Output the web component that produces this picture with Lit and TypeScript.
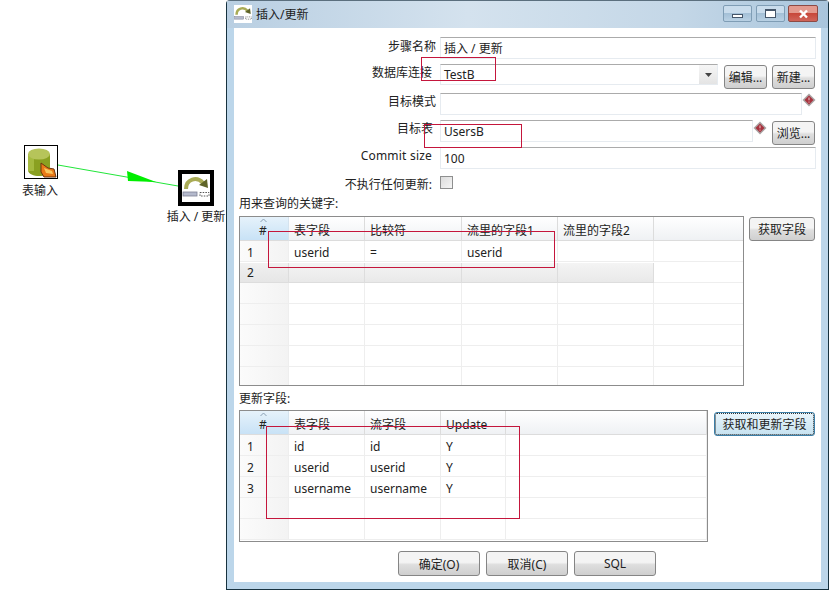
import { LitElement, html, css, svg } from "lit";
import { customElement, property } from "lit/decorators.js";

const diamond = svg`<svg width="14" height="14" viewBox="0 0 14 14"><path d="M7 .5 13.5 7 7 13.5 .5 7Z" fill="#a9a3a3"/><path d="M7 2.5 11.5 7 7 11.5 2.5 7Z" fill="#a8323e"/><path d="M7 4.5v2.8M7 8.6v1" stroke="#f0d0d0" stroke-width="1"/></svg>`;

const updateIcon = (s: number) => html`<svg width="${s}" height="${s}" viewBox="0 0 28 28">
  <path d="M4 15C4 5 15 2 21 9" fill="none" stroke="#a9ab55" stroke-width="4"/>
  <path d="M17 11 26 14 25 5Z" fill="#5f6428"/>
  <rect x="1" y="18" width="14" height="4" fill="#b4b9cc" stroke="#7e8194" stroke-width=".8"/>
  <rect x="18" y="18.5" width="9" height="3.5" fill="none" stroke="#555" stroke-width="1" stroke-dasharray="1.5 1.2"/>
</svg>`;

@customElement("grid-table")
export class GridTable extends LitElement {
  @property({ type: Array }) cols: number[] = [];
  @property({ type: Array }) heads: string[] = [];
  @property({ type: Array }) rows: string[][] = [];
  @property({ type: Number }) total = 0;
  @property({ type: Number }) selected = -1;
  static styles = css`
    :host { display: block; border: 1px solid #8c8c8c; background: #fff; overflow: hidden; height: 100%; box-sizing: border-box; }
    .row { display: flex; height: 21px; }
    .row.head { height: 24px; }
    .c { box-sizing: border-box; flex: none; border-right: 1px solid #eeeeee; border-bottom: 1px solid #eeeeee; padding-left: 5px; line-height: 23px; white-space: nowrap; overflow: hidden; }
    .c.n { background: linear-gradient(90deg, #fbfbfb, #f3f3f3); padding-left: 7px; }
    .head .c { background: linear-gradient(#ffffff, #eff1f4); border-color: #dcdcdc; line-height: 27px; }
    .head .c.n { background: linear-gradient(#e6f2fb, #c8e2f6); text-align: center; padding: 0 2px 0 0; position: relative; border-right-color: #d5e3ee; }
    .chev { position: absolute; left: 20px; top: 1px; }
    .row.sel { height: 20px; margin-top: 1px; }
    .sel .c { background: linear-gradient(#f4f4f4, #e9e9e9); border-color: #dddddd; line-height: 20px; }
    .sel .c.n { background: linear-gradient(#f0f0f0, #e6e6e6); }
    .sel .c:last-child { background: #fff; border-color: #eeeeee; }
  `;
  render() {
    const blank = Array.from({ length: Math.max(0, this.total - this.rows.length) }, () => [] as string[]);
    return html`
      <div class="row head">
        ${this.cols.map((w, i) => html`<div class="c ${i === 0 ? "n" : ""}" style="width:${w}px">
          ${i === 0 ? html`<svg class="chev" width="7" height="5" viewBox="0 0 7 5"><path d="M.5 4 3.5 1 6.5 4" fill="none" stroke="#8aa0b4"/></svg>` : ""}${this.heads[i] ?? ""}</div>`)}
      </div>
      ${[...this.rows, ...blank].map((r, ri) => html`
        <div class="row ${ri === this.selected ? "sel" : ""}">
          ${this.cols.map((w, i) => html`<div class="c ${i === 0 ? "n" : ""}" style="width:${w}px">${r[i] ?? ""}</div>`)}
        </div>`)}
    `;
  }
}

@customElement("app-root")
export class AppRoot extends LitElement {
  static styles = css`
    :host { display: block; position: relative; width: 836px; height: 605px; background: #fff; overflow: hidden;
      font: 12px "Noto Sans", "Noto Sans CJK SC", sans-serif; color: #222; }
    .node { position: absolute; display: flex; flex-direction: column; align-items: center; }
    .n1 { left: 11px; top: 145px; width: 60px; }
    .n2 { left: 165px; top: 170px; width: 62px; }
    .ic1 { width: 32px; height: 32px; border: 1px solid #000; background: #fff; display: block; }
    .ic2 { width: 28px; height: 28px; border: 4px solid #000; background: #fff; display: flex; align-items: center; justify-content: center; }
    .nl { margin-top: 3px; margin-left: -2px; white-space: nowrap; line-height: 17px; }
    .n2 .nl { margin-top: 2px; margin-left: 0; }
    .link { position: absolute; left: 0; top: 0; }
    .win { position: absolute; left: 226px; top: 0; width: 603px; height: 590px; box-sizing: border-box;
      border: 1px solid #17323f; border-top-color: #5b6f7e; border-radius: 4px 4px 0 0;
      background: #bcd6ea;
      display: flex; flex-direction: column; padding: 0 7px 7px 7px; }
    .win::before { content: ""; position: absolute; left: 0; right: 0; top: 0; height: 27px;
      background: linear-gradient(90deg, #b9cfe2, #d4e2ee 40%, #c4d7e7 75%, #a9c5dc); }
    .title { position: relative; height: 26px; flex: none; display: flex; align-items: center; gap: 4px; }
    .title .ti { width: 18px; height: 18px; background: #fff; display: flex; }
    .title span { color: #1c1c1c; }
    .caps { margin-left: auto; display: flex; gap: 4px; align-items: flex-start; margin-right: 3px; margin-top: -1px; }
    .cap { width: 29px; height: 17px; box-sizing: border-box; border: 1px solid #7f9db5; border-radius: 2px;
      background: linear-gradient(#c9dcec 45%, #a4c0d7 50%, #b9d1e4); display: flex; align-items: center; justify-content: center; }
    .cap.x { width: 30px; margin-left: -1px; background: linear-gradient(#e39a8e 45%, #c8483a 50%, #d0655a); border-color: #8d4a44; }
    .cap i { display: block; box-sizing: border-box; background: #fff; }
    .body { flex: 1; background: #fff; box-sizing: border-box; padding: 10px 5px 0 5px; display: flex; flex-direction: column; min-height: 0; }
    .form { display: grid; grid-template-columns: 194px 1fr; column-gap: 7px;
      grid-template-rows: 27px 29px 27px 27px 29px 20px; flex: none; }
    .lab { text-align: right; line-height: 18px; white-space: nowrap; }
    .lab.wide { margin-right: -3px; }
    .lab.low { padding-top: 1px; }
    .lab.tight { margin-right: 1px; }
    .lab.spaced { letter-spacing: .2px; }
    .ctl { display: flex; gap: 5px; align-items: flex-start; min-width: 0; }
    .inp { flex: 1; min-width: 0; height: 22px; box-sizing: border-box; border: 1px solid #e6ebf0; border-top-color: #ababab;
      padding-left: 3px; line-height: 22px; background: #fff; }
    .combo { height: 21px; display: flex; justify-content: space-between; line-height: 20px; margin-right: 1px; }
    .drop { width: 18px; background: linear-gradient(#f6f6f6, #e4e4e4); display: flex; align-items: center; justify-content: center; }
    .btn { flex: none; box-sizing: border-box; height: 24px; border: 1px solid #858585; border-radius: 3px;
      background: linear-gradient(#f4f4f4 45%, #dedede 55%, #cfcfcf); display: flex; align-items: center; justify-content: center; white-space: nowrap; color: #222; }
    .w43 { width: 43px; margin-top: 1px; }
    .end { margin-right: 1px; }
    .dia { flex: none; display: block; }
    .d3 { margin-left: -5px; }
    .d4 { margin-left: -5px; margin-top: 1px; }
    .chk { width: 13px; height: 13px; box-sizing: border-box; border: 1px solid #8e8f8f; background: linear-gradient(135deg, #dcdcdc, #f5f5f5); }
    .sec { flex: none; height: 19px; line-height: 14px; margin-top: 1px; }
    .split { display: flex; flex: none; }
    .t1 { width: 505px; height: 170px; flex: none; }
    .t2 { width: 469px; height: 132px; flex: none; }
    .side1 { margin-left: 5px; width: 66px; margin-top: 1px; }
    .side2 { margin-left: 6px; width: 101px; margin-top: 2px; border: 1px solid #3c7fa8;
      background: linear-gradient(#e9f5fb, #c6e2f0); outline: 1px dotted #333; outline-offset: -2px; }
    .sec2 { margin-top: 6px; height: 18px; line-height: 14px; flex: none; }
    .foot { display: flex; justify-content: flex-start; gap: 6px; padding: 9px 0 0 159px; flex: none; }
    .foot .btn { width: 82px; height: 25px; }
    .mark { position: absolute; box-sizing: border-box; border: 1px solid #c4163c; pointer-events: none; }
    .m1 { left: 421px; top: 57px; width: 75px; height: 24px; }
    .m2 { left: 424px; top: 124px; width: 98px; height: 24px; }
    .m3 { left: 268px; top: 231px; width: 287px; height: 37px; }
    .m4 { left: 266px; top: 426px; width: 254px; height: 93px; }
  `;
  render() {
    return html`
      <svg class="link" width="230" height="230">
        <path d="M58 165 178 186" stroke="#22e63a" stroke-width="1"/>
        <path d="M127 171 128 181 156 182Z" fill="#00ee00"/>
      </svg>
      <div class="node n1">
        <svg class="ic1" viewBox="0 0 32 32">
          <path d="M3 8V24C3 28 9 30 14 30S25 28 25 24V8Z" fill="#8aa021"/>
          <rect x="3" y="9" width="6" height="16" fill="#a5ba3f"/>
          <ellipse cx="14" cy="8" rx="11" ry="5.5" fill="#b6c45a"/>
          <path d="M16 17 23 22 29 23 31 31 19 31 16 26Z" fill="#ea7a18" stroke="#6e3510" stroke-width="1"/>
          <path d="M19 22 27 25 28 28 21 27Z" fill="#f8c860"/>
        </svg>
        <div class="nl">表输入</div>
      </div>
      <div class="node n2">
        <div class="ic2">${updateIcon(28)}</div>
        <div class="nl">插入 / 更新</div>
      </div>
      <div class="win">
        <div class="title">
          <div class="ti">${updateIcon(18)}</div>
          <span>插入/更新</span>
          <div class="caps">
            <div class="cap"><i style="width:11px;height:4px;border:1px solid #45566a;margin-top:5px"></i></div>
            <div class="cap"><i style="width:11px;height:9px;border:2px solid #45566a;border-width:2px 1px 1px"></i></div>
            <div class="cap x"><svg width="11" height="10" viewBox="0 0 11 10"><path d="M2 1.5 9 8.5M9 1.5 2 8.5" stroke="#fff" stroke-width="2.4"/></svg></div>
          </div>
        </div>
        <div class="body">
          <div class="form">
            <div class="lab wide low">步骤名称</div>
            <div class="ctl"><div class="inp">插入 / 更新</div></div>
            <div class="lab tight">数据库连接</div>
            <div class="ctl">
              <div class="inp combo"><span>TestB</span><span class="drop"><svg width="7" height="4" viewBox="0 0 7 4"><path d="M0 0H7L3.5 4Z" fill="#444"/></svg></span></div>
              <div class="btn w43">编辑...</div><div class="btn w43 end">新建...</div>
            </div>
            <div class="lab wide">目标模式</div>
            <div class="ctl"><div class="inp"></div><span class="dia d3">${diamond}</span></div>
            <div class="lab">目标表</div>
            <div class="ctl"><div class="inp">UsersB</div><span class="dia d4">${diamond}</span><div class="btn w43 end">浏览...</div></div>
            <div class="lab tight spaced">Commit size</div>
            <div class="ctl"><div class="inp">100</div></div>
            <div class="lab tight">不执行任何更新:</div>
            <div class="ctl"><div class="chk"></div></div>
          </div>
          <div class="sec">用来查询的关键字:</div>
          <div class="split">
            <div class="t1"><grid-table
              .cols=${[49, 76, 97, 96, 96, 90]}
              .heads=${["#", "表字段", "比较符", "流里的字段1", "流里的字段2", ""]}
              .rows=${[["1", "userid", "=", "userid"], ["2"]]}
              .total=${7} .selected=${1}></grid-table></div>
            <div class="btn side1">获取字段</div>
          </div>
          <div class="sec2">更新字段:</div>
          <div class="split">
            <div class="t2"><grid-table
              .cols=${[49, 76, 76, 65, 201]}
              .heads=${["#", "表字段", "流字段", "Update", ""]}
              .rows=${[["1", "id", "id", "Y"], ["2", "userid", "userid", "Y"], ["3", "username", "username", "Y"]]}
              .total=${5}></grid-table></div>
            <div class="btn side2">获取和更新字段</div>
          </div>
          <div class="foot">
            <div class="btn">确定(O)</div><div class="btn">取消(C)</div><div class="btn">SQL</div>
          </div>
        </div>
      </div>
      <div class="mark m1"></div><div class="mark m2"></div><div class="mark m3"></div><div class="mark m4"></div>
    `;
  }
}
